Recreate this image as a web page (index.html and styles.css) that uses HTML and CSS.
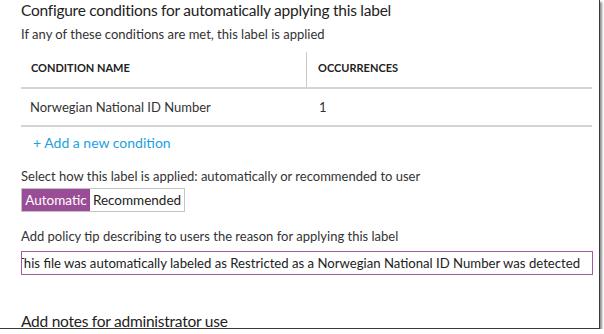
FILE: index.html
```html
<!DOCTYPE html>
<html>
<head>
<meta charset="utf-8">
<link rel="stylesheet" href="styles.css">
</head>
<body>
<div class="frame">
  <div class="content">
    <h2 class="title">Configure conditions for automatically applying this label</h2>
    <p class="sub">If any of these conditions are met, this label is applied</p>
    <div class="table">
      <div class="thead">
        <div class="th name">CONDITION NAME</div>
        <div class="th occ">OCCURRENCES</div>
      </div>
      <div class="trow">
        <div class="td name">Norwegian National ID Number</div>
        <div class="td occ">1</div>
      </div>
    </div>
    <a class="add-link">+ Add a new condition</a>
    <p class="label sel">Select how this label is applied: automatically or recommended to user</p>
    <div class="toggle">
      <span class="opt on">Automatic</span><span class="opt off">Recommended</span>
    </div>
    <p class="label tip">Add policy tip describing to users the reason for applying this label</p>
    <div class="input"><span class="input-text">This file was automatically labeled as Restricted as a Norwegian National ID Number was detected</span></div>
    <h2 class="title notes">Add notes for administrator use</h2>
  </div>
</div>
</body>
</html>
```

FILE: styles.css
```css
html, body {
  margin: 0;
  padding: 0;
  background: #ffffff;
}
.frame {
  width: 600px;
  height: 329px;
  border-right: 1px solid #3a3a3a;
  border-bottom: 1px solid #3a3a3a;
  box-shadow: 2px 2px 2px rgba(0,0,0,0.45);
  overflow: hidden;
  box-sizing: border-box;
  font-family: "Lato", "Noto Sans", sans-serif;
  color: #333333;
}
.content {
  padding: 0 7px 0 21px;
}
.title {
  margin: 0;
  padding-top: 0;
  font-size: 15.5px;
  font-weight: 400;
  letter-spacing: -0.25px;
  line-height: 20px;
  color: #222;
}
.sub {
  margin: 6px 0 0;
  font-size: 13px;
  line-height: 17px;
}
.table {
  margin-top: 5px;
}
.thead {
  display: flex;
  height: 41px;
  border-bottom: 2px solid #d4d4d4;
  box-sizing: border-box;
}
.th {
  font-size: 11px;
  font-weight: 700;
  color: #222;
  display: flex;
  align-items: center;
}
.name {
  width: 286px;
  padding-left: 10px;
  box-sizing: border-box;
}
.th.name {
  border-right: 1px solid #c8c8c8;
  margin-top: 4px;
  padding-bottom: 5px;
}
.th.occ {
  padding-left: 11px;
  padding-bottom: 1px;
}
.trow {
  display: flex;
  height: 38px;
  align-items: center;
  border-bottom: 2px solid #d4d4d4;
  box-sizing: border-box;
  font-size: 13px;
}
.td.name {
  padding-left: 9px;
}
.td.occ {
  padding-left: 12px;
}
.add-link {
  display: block;
  margin: 6px 0 0 12px;
  font-size: 14px;
  line-height: 20px;
  color: #1ba1e2;
}
.label {
  margin: 0;
  font-size: 13px;
  line-height: 17px;
}
.sel {
  margin-top: 15px;
}
.toggle {
  display: inline-flex;
  margin-top: 3px;
  border: 1px solid #c4c4c4;
  height: 24px;
  box-sizing: border-box;
}
.opt {
  display: flex;
  align-items: center;
  justify-content: center;
  font-size: 13.5px;
  color: #222;
}
.opt.on {
  width: 68px;
  background: #9b4c96;
  color: #ffffff;
}
.opt.off {
  width: 94px;
}
.tip {
  margin-top: 16px;
}
.input {
  margin-top: 6px;
  height: 24px;
  width: 572px;
  box-sizing: border-box;
  border: 1px solid #a65ba0;
  overflow: hidden;
  display: flex;
  align-items: center;
  justify-content: flex-end;
  padding-right: 12px;
  white-space: nowrap;
  font-size: 13.15px;
  color: #222;
}
.notes {
  margin-top: 36px;
}
```
